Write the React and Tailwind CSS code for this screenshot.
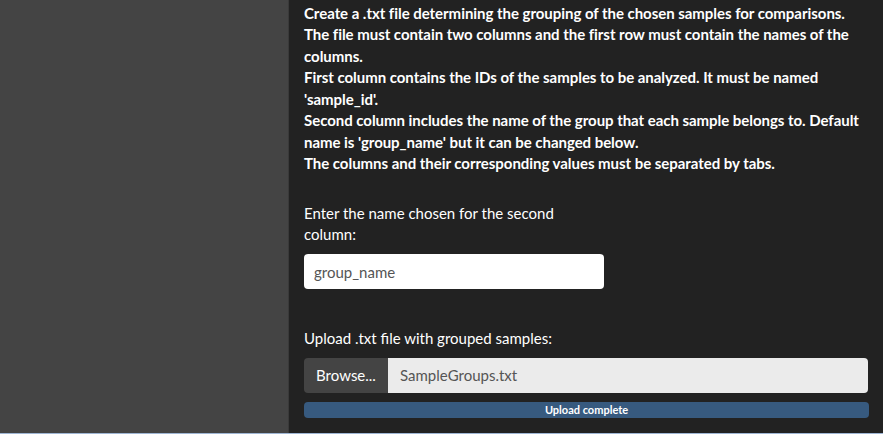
export default function App() {
  const lines = [
    "Create a .txt file determining the grouping of the chosen samples for comparisons.",
    "The file must contain two columns and the first row must contain the names of the columns.",
    "First column contains the IDs of the samples to be analyzed. It must be named 'sample_id'.",
    "Second column includes the name of the group that each sample belongs to. Default name is 'group_name' but it can be changed below.",
    "The columns and their corresponding values must be separated by tabs.",
  ];

  return (
    <div
      className="flex flex-col w-[883px] h-[434px] overflow-hidden bg-[#222222]"
      style={{ fontFamily: "Lato, 'Open Sans', sans-serif" }}
    >
      <div className="flex flex-1 min-h-0">
        {/* Sidebar */}
        <div className="w-[289px] shrink-0 bg-[#444444] border-r border-[#3a3a3a]" />

        {/* Main panel */}
        <div className="flex-1 pl-[15px] pr-[14px] pt-[3px] text-white text-[15px] leading-[21.43px]">
          <div className="font-bold tracking-[-0.04px]">
            {lines.map((l, i) => (
              <div key={i}>{l}</div>
            ))}
          </div>

          <div className="mt-[28px] w-[250px]">
            Enter the name chosen for the second column:
          </div>
          <input
            type="text"
            defaultValue="group_name"
            className="mt-[9px] w-[300px] h-[35px] rounded-[4px] bg-white px-[10px] text-[#555555] text-[15px] outline-none"
            style={{ fontFamily: "Lato, sans-serif" }}
          />

          <div className="mt-[39px]">Upload .txt file with grouped samples:</div>
          <div className="mt-[8px] flex h-[35px] pr-[1px]">
            <div className="w-[84px] flex items-center justify-center bg-[#444444] rounded-l-[4px] text-white">
              Browse...
            </div>
            <div className="flex-1 flex items-center px-[12px] bg-[#ebebeb] rounded-r-[4px] text-[#555555]">
              SampleGroups.txt
            </div>
          </div>
          <div className="mt-[9px] h-[16px] rounded-[4px] bg-[#375a7f] flex items-center justify-center text-[11px] font-bold text-white leading-none">
            Upload complete
          </div>
        </div>
      </div>
      <div className="h-[1px] bg-[#9fb6d4]" />
    </div>
  );
}
